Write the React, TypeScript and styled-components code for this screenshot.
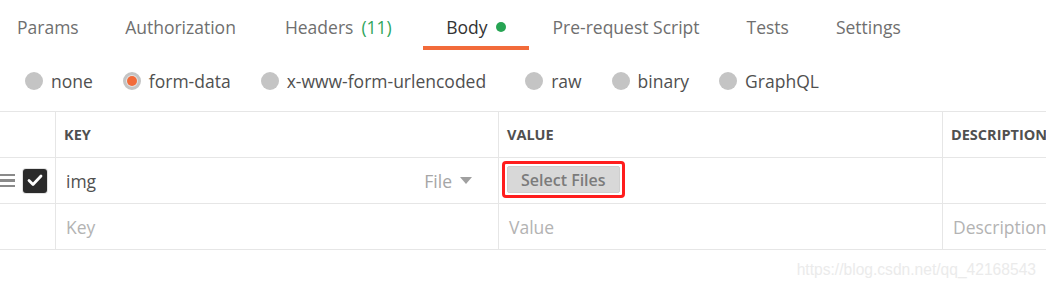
import styled, { createGlobalStyle } from "styled-components";

const GlobalStyle = createGlobalStyle`
  html, body {
    margin: 0;
    padding: 0;
    background: #fff;
    overflow: hidden;
  }
  body {
    font-family: "Open Sans", "Noto Sans", sans-serif;
    color: #505050;
  }
`;

const tabs = ["Params", "Authorization", "Headers", "Body", "Pre-request Script", "Tests", "Settings"];
const bodyTypes = ["none", "form-data", "x-www-form-urlencoded", "raw", "binary", "GraphQL"];

const Page = styled.div`
  width: 1046px;
  height: 289px;
  overflow: hidden;
`;

const TabBar = styled.div`
  display: flex;
  height: 50px;
`;

const Tab = styled.div<{ $active?: boolean; $wide?: boolean }>`
  display: flex;
  align-items: center;
  gap: 8px;
  box-sizing: border-box;
  height: 50px;
  padding: 8px ${(p) => (p.$wide ? "31px" : "23.5px")} 0 ${(p) => (p.$wide ? "25.5px" : "23.5px")};
  font-size: 17.5px;
  color: ${(p) => (p.$active ? "#333" : "#6f6f6f")};
  border-bottom: 4px solid ${(p) => (p.$active ? "#f26b3a" : "transparent")};
  white-space: nowrap;

  &:first-child {
    padding-left: 17px;
    padding-right: 23px;
  }
`;

const Count = styled.span`
  color: #2ea55c;
  margin-left: 8px;
`;

const Dot = styled.span`
  width: 10px;
  height: 10px;
  border-radius: 50%;
  background: #26a453;
`;

const RadioRow = styled.div`
  display: flex;
  align-items: center;
  height: 61px;
  padding-left: 25px;
  gap: 30px;
`;

const RadioItem = styled.label`
  display: flex;
  align-items: center;
  gap: 8px;
  font-size: 17.5px;
  color: #505050;

  &:nth-child(3) {
    margin-right: 9px;
  }
`;

const Radio = styled.span<{ $checked?: boolean }>`
  display: flex;
  align-items: center;
  justify-content: center;
  box-sizing: border-box;
  width: 18px;
  height: 18px;
  border-radius: 50%;
  background: ${(p) => (p.$checked ? "#e3e3e3" : "#c4c4c4")};
  border: ${(p) => (p.$checked ? "3px solid #c4c4c4" : "none")};

  &::after {
    content: "";
    display: ${(p) => (p.$checked ? "block" : "none")};
    width: 10px;
    height: 10px;
    border-radius: 50%;
    background: #f26b3a;
  }
`;

const Table = styled.div`
  border-top: 1px solid #e6e6e6;
`;

const Row = styled.div`
  display: grid;
  grid-template-columns: 55px 443px 444px 1fr;
  box-sizing: border-box;
  height: 46px;
  border-bottom: 1px solid #e6e6e6;
`;

const Cell = styled.div<{ $head?: boolean; $first?: boolean }>`
  display: flex;
  align-items: center;
  box-sizing: border-box;
  min-width: 0;
  overflow: hidden;
  white-space: nowrap;
  padding-left: ${(p) => (p.$first ? "0" : p.$head ? "8px" : "10px")};
  border-left: ${(p) => (p.$first ? "none" : "1px solid #e6e6e6")};
  font-size: ${(p) => (p.$head ? "14.5px" : "17.5px")};
  font-weight: ${(p) => (p.$head ? 700 : 400)};
  color: #505050;
`;

const Placeholder = styled.span`
  color: #b3b3b3;
`;

const Handle = styled.div`
  display: flex;
  flex-direction: column;
  gap: 3px;
  width: 15px;
  margin-right: 8px;

  span {
    height: 2.5px;
    background: #8a8a8a;
  }
`;

const Check = styled.span`
  display: flex;
  align-items: center;
  justify-content: center;
  box-sizing: border-box;
  width: 24px;
  height: 24px;
  border-radius: 3px;
  background: #2b2b2b;
  box-shadow: 0 0 0 1px #e2e2e2;
`;

const KeyCell = styled.div`
  display: flex;
  align-items: center;
  justify-content: space-between;
  width: 100%;
  padding-right: 26px;
`;

const TypePicker = styled.span`
  display: flex;
  align-items: center;
  gap: 8px;
  color: #a6a6a6;

  &::after {
    content: "";
    border-left: 6px solid transparent;
    border-right: 6px solid transparent;
    border-top: 7px solid #a0a0a0;
  }
`;

const Highlight = styled.div`
  margin-left: -7px;
  margin-top: -2px;
  border: 3px solid #ff1d1d;
  border-radius: 4px;
  padding: 2px;
`;

const FileButton = styled.button`
  display: flex;
  align-items: center;
  height: 27px;
  padding: 0 13px;
  border: 1px solid #cfcfcf;
  border-radius: 2px;
  background: #d8d8d8;
  font-family: "Open Sans", sans-serif;
  font-size: 16px;
  font-weight: 600;
  color: #7b7b7b;
`;

const Footer = styled.div`
  display: flex;
  justify-content: flex-end;
  padding: 11px 10px 0 0;
`;

const Watermark = styled.span`
  font-family: "Liberation Sans", Arial, sans-serif;
  font-size: 15.6px;
  color: #ebebeb;
`;

export default function App() {
  return (
    <Page>
      <GlobalStyle />
      <TabBar>
        {tabs.map((t) => (
          <Tab key={t} $active={t === "Body"} $wide={t === "Headers"}>
            <span>
              {t}
              {t === "Headers" && <Count>(11)</Count>}
            </span>
            {t === "Body" && <Dot />}
          </Tab>
        ))}
      </TabBar>
      <RadioRow>
        {bodyTypes.map((b) => (
          <RadioItem key={b}>
            <Radio $checked={b === "form-data"} />
            {b}
          </RadioItem>
        ))}
      </RadioRow>
      <Table>
        <Row>
          <Cell $first />
          <Cell $head>KEY</Cell>
          <Cell $head>VALUE</Cell>
          <Cell $head>DESCRIPTION</Cell>
        </Row>
        <Row>
          <Cell $first>
            <Handle>
              <span />
              <span />
              <span />
            </Handle>
            <Check>
              <svg width="16" height="13" viewBox="0 0 16 13">
                <path d="M2 6.5 L6 10.5 L14 2" fill="none" stroke="#fff" strokeWidth="2.8" strokeLinecap="round" strokeLinejoin="round" />
              </svg>
            </Check>
          </Cell>
          <Cell>
            <KeyCell>
              <span>img</span>
              <TypePicker>File</TypePicker>
            </KeyCell>
          </Cell>
          <Cell>
            <Highlight>
              <FileButton>Select Files</FileButton>
            </Highlight>
          </Cell>
          <Cell />
        </Row>
        <Row>
          <Cell $first />
          <Cell>
            <Placeholder>Key</Placeholder>
          </Cell>
          <Cell>
            <Placeholder>Value</Placeholder>
          </Cell>
          <Cell>
            <Placeholder>Description</Placeholder>
          </Cell>
        </Row>
      </Table>
      <Footer>
        <Watermark>https://blog.csdn.net/qq_42168543</Watermark>
      </Footer>
    </Page>
  );
}
